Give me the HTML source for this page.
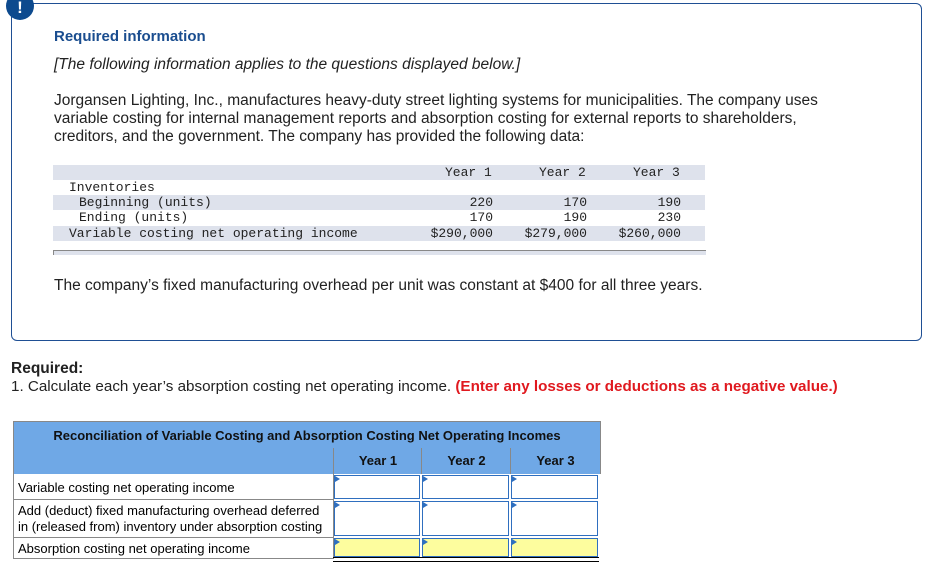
<!DOCTYPE html>
<html><head><style>
body{margin:0;width:937px;height:569px;background:#fff;font-family:"Liberation Sans",sans-serif;position:relative;overflow:hidden}
.a{position:absolute}
.box{left:11px;top:3px;width:909px;height:336px;border:1.5px solid #1f4f94;border-radius:6px}
.ic{left:6px;top:-8px;width:28px;height:28px;border-radius:50%;background:#0d4a8e;color:#fff;font-weight:bold;font-size:17px;text-align:center;line-height:32px}
.t{font-size:15.5px;color:#222;line-height:18px}
.m{font-family:"Liberation Mono",monospace;font-size:13px;color:#222;white-space:pre;line-height:15.3px}
.band{background:#dee2ec}
.h{font-weight:bold;font-size:13px;text-align:center;line-height:26px;color:#111}
.l{font-size:13px}
</style></head><body>
<div class="a box"></div>
<div class="a ic">!</div>
<div class="a" style="left:54px;top:28px;font-size:15px;font-weight:bold;color:#1a4d8f">Required information</div>
<div class="a t" style="left:54px;top:56px;font-style:italic">[The following information applies to the questions displayed below.]</div>
<div class="a t" style="left:54px;top:92px;width:790px">Jorgansen Lighting, Inc., manufactures heavy-duty street lighting systems for municipalities. The company uses variable costing for internal management reports and absorption costing for external reports to shareholders, creditors, and the government. The company has provided the following data:</div>
<div class="a band" style="left:53px;top:165px;width:652px;height:15px"></div>
<div class="a band" style="left:53px;top:195px;width:652px;height:15px"></div>
<div class="a band" style="left:53px;top:226px;width:652px;height:15px"></div>
<div class="a band" style="left:53px;top:250px;width:652px;height:4px;border-top:1px solid #888;border-left:1px solid #888"></div>
<div class="a m" style="left:445px;top:165px">Year 1</div>
<div class="a m" style="left:539px;top:165px">Year 2</div>
<div class="a m" style="left:633px;top:165px">Year 3</div>
<div class="a m" style="left:69px;top:180px">Inventories</div>
<div class="a m" style="left:79px;top:195px">Beginning (units)</div>
<div class="a m" style="left:79px;top:210px">Ending (units)</div>
<div class="a m" style="left:69px;top:226px">Variable costing net operating income</div>
<div class="a m" style="left:403px;top:195px;width:90px;text-align:right">220
170
$290,000</div>
<div class="a m" style="left:497px;top:195px;width:90px;text-align:right">170
190
$279,000</div>
<div class="a m" style="left:591px;top:195px;width:90px;text-align:right">190
230
$260,000</div>
<div class="a t" style="left:54px;top:277px">The company’s fixed manufacturing overhead per unit was constant at $400 for all three years.</div>
<div class="a t" style="left:11px;top:360px;font-weight:bold">Required:</div>
<div class="a t" style="left:11px;top:378px;font-size:15.2px">1. Calculate each year’s absorption costing net operating income. <b style="color:#e0191f">(Enter any losses or deductions as a negative value.)</b></div>
<div class="a h" style="left:13px;top:421px;width:586px;height:26px;background:#6fa8e6;border:1px solid #888;line-height:28px">Reconciliation of Variable Costing and Absorption Costing Net Operating Incomes</div>
<div class="a" style="left:13px;top:448px;width:320px;height:26px;background:#6fa8e6;border-left:1px solid #888"></div>
<div class="a h" style="left:333px;top:448px;width:88px;height:26px;background:#6fa8e6;border-left:1px solid #888">Year 1</div>
<div class="a h" style="left:421px;top:448px;width:89px;height:26px;background:#6fa8e6;border-left:1px solid #888">Year 2</div>
<div class="a h" style="left:510px;top:448px;width:89px;height:26px;background:#6fa8e6;border-left:1px solid #888;border-right:1px solid #888">Year 3</div>
<div class="a" style="left:13px;top:474px;width:319px;height:84px;border:1px solid #888;border-top:none"></div>
<div class="a" style="left:14px;top:499px;width:319px;border-top:1px solid #888"></div>
<div class="a" style="left:14px;top:537px;width:319px;border-top:1px solid #888"></div>
<div class="a l" style="left:18px;top:480px">Variable costing net operating income</div>
<div class="a l" style="left:18px;top:503px;line-height:16px">Add (deduct) fixed manufacturing overhead deferred<br>in (released from) inventory under absorption costing</div>
<div class="a l" style="left:18px;top:541px">Absorption costing net operating income</div>
<div id="cells"></div>
<script>
var xs=[333,421,510],ws=[88,89,89],rows=[[474,26,'#fff'],[500,37,'#fff'],[537,21,'#fdfd9e']];
var h='';rows.forEach(function(r){xs.forEach(function(x,i){
h+='<div class="a" style="left:'+(x+1)+'px;top:'+(r[0]+1)+'px;width:'+(ws[i]-4)+'px;height:'+(r[1]-4)+'px;background:'+r[2]+';border:1.5px solid #2f6fbf"></div>';
h+='<div class="a" style="left:'+(x+2)+'px;top:'+(r[0]+2)+'px;width:0;height:0;border-left:5px solid #2f6fbf;border-top:3.5px solid transparent;border-bottom:3.5px solid transparent"></div>';
if(r[2]!='#fff')h+='<div class="a" style="left:'+x+'px;top:'+(r[0]+r[1]-1)+'px;width:'+ws[i]+'px;height:3px;border-top:1px solid #000;border-bottom:1px solid #000"></div>';
});});document.getElementById('cells').innerHTML=h;
</script>
</body></html>
